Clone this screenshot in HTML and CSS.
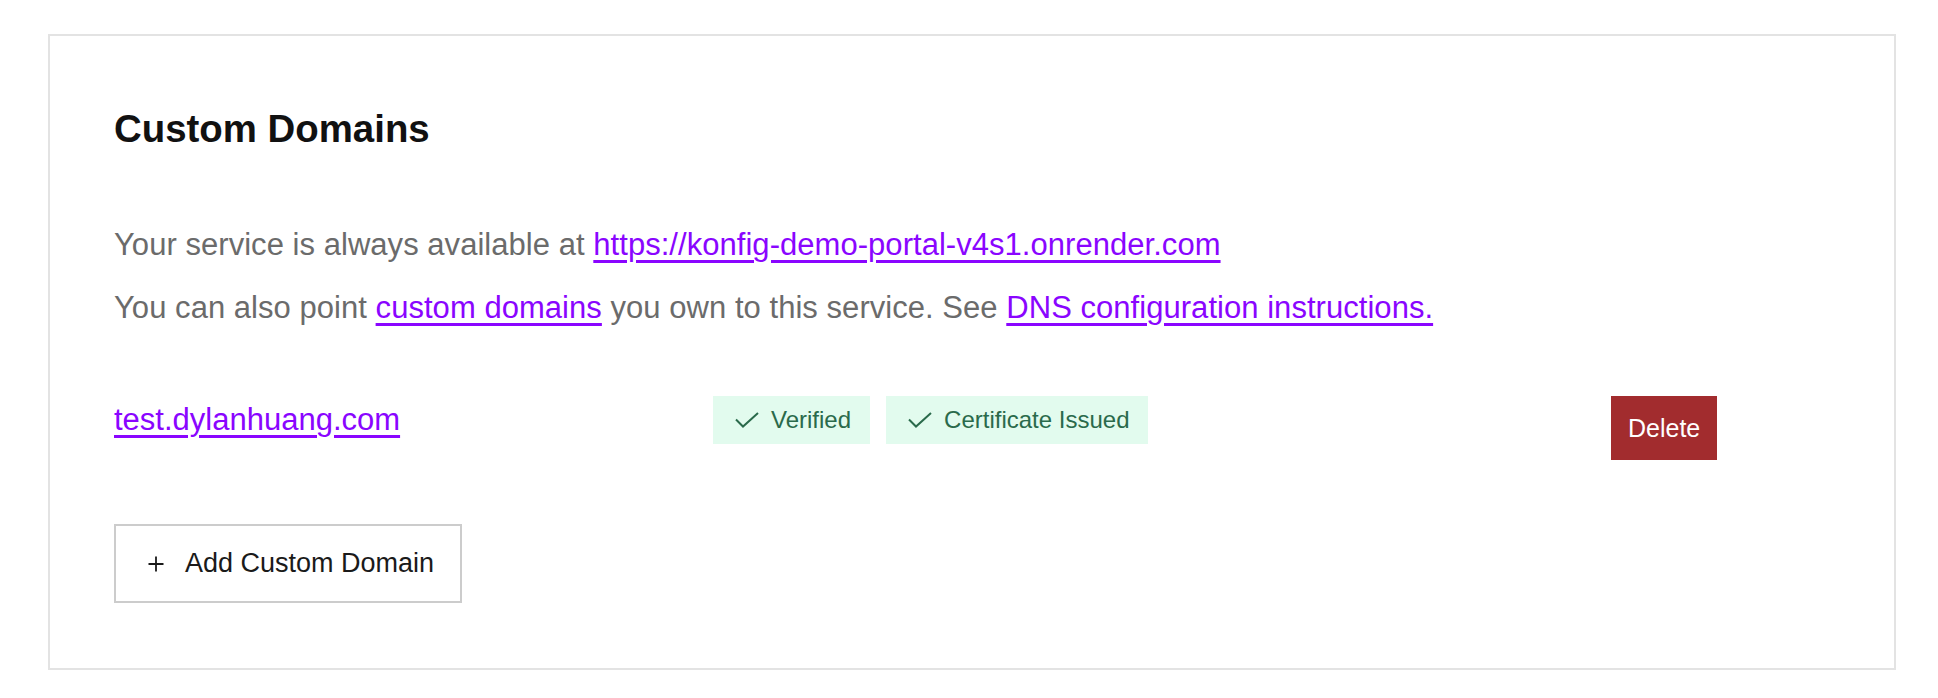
FILE: index.html
```html
<!DOCTYPE html>
<html lang="en">
<head>
<meta charset="utf-8">
<title>Custom Domains</title>
<link rel="stylesheet" href="styles.css">
</head>
<body>
<section class="card">
  <h2 class="title">Custom Domains</h2>
  <p class="text first">Your service is always available at <a class="link" href="#">https://konfig-demo-portal-v4s1.onrender.com</a></p>
  <p class="text second">You can also point <a class="link" href="#">custom domains</a> you own to this service. See <a class="link" href="#">DNS configuration instructions.</a></p>
  <div class="domain-row">
    <a class="link domain" href="#">test.dylanhuang.com</a>
    <div class="badges">
      <span class="badge"><svg class="check" width="24" height="16" viewBox="0 0 24 16"><polyline points="1,7.5 8,14.5 23,1" fill="none" stroke="currentColor" stroke-width="2"/></svg>Verified</span>
      <span class="badge"><svg class="check" width="24" height="16" viewBox="0 0 24 16"><polyline points="1,7.5 8,14.5 23,1" fill="none" stroke="currentColor" stroke-width="2"/></svg>Certificate Issued</span>
    </div>
    <button class="delete" type="button">Delete</button>
  </div>
  <button class="add" type="button"><svg class="plus" width="16" height="16" viewBox="0 0 16 16"><path d="M8 0.5V15.5M0.5 8H15.5" stroke="currentColor" stroke-width="1.8" fill="none"/></svg>Add Custom Domain</button>
</section>
</body>
</html>
```

FILE: styles.css
```css
html, body {
  margin: 0;
  padding: 0;
  background: #ffffff;
}
body {
  padding: 34px 42px 28px 48px;
  font-family: "Liberation Sans", Arial, sans-serif;
}
.card {
  border: 2px solid #e3e3e3;
  padding: 70px 0 65px 64px;
  display: flex;
  flex-direction: column;
  align-items: flex-start;
}
.title {
  margin: 0;
  font-size: 38.4px;
  line-height: 46px;
  font-weight: 700;
  color: #111111;
}
.text {
  margin: 0;
  font-size: 31px;
  line-height: 40px;
  letter-spacing: 0.04px;
  color: #6b6b6b;
}
.text.first { margin-top: 73px; }
.text.second { margin-top: 23px; }
.link {
  color: #8a05ff;
  text-decoration: underline;
  text-decoration-thickness: 3px;
  text-underline-offset: 5px;
}
.domain-row {
  margin-top: 68px;
  display: grid;
  grid-template-columns: 599px 898px auto;
  align-items: start;
}
.domain {
  font-size: 31px;
  line-height: 48px;
  justify-self: start;
}
.badges {
  display: flex;
  gap: 16px;
}
.badge {
  display: flex;
  align-items: center;
  height: 48px;
  padding: 0 19px 0 22px;
  gap: 12px;
  background: #e2fbee;
  color: #2a6a4b;
  font-size: 24px;
}
.check { display: block; }
.delete {
  height: 64px;
  padding: 0 17px 0 17px;
  border: none;
  background: #a22c2e;
  color: #ffffff;
  font-family: "Liberation Sans", Arial, sans-serif;
  font-size: 25px;
}
.add {
  margin-top: 64px;
  height: 79px;
  display: flex;
  align-items: center;
  gap: 21px;
  padding: 0 26px 0 32px;
  border: 2px solid #cccccc;
  background: #ffffff;
  color: #1a1a1a;
  font-family: "Liberation Sans", Arial, sans-serif;
  font-size: 27px;
}
.plus { display: block; }
```
